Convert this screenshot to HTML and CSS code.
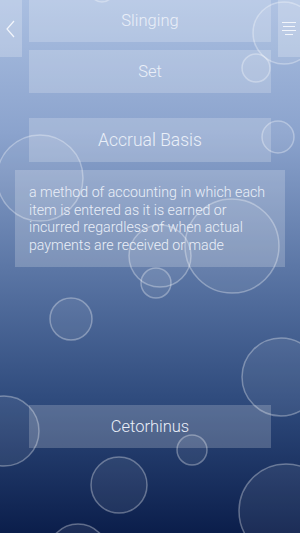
FILE: index.html
```html
<!DOCTYPE html>
<html lang="en">
<head>
    <meta charset="UTF-8">
    <meta name="viewport" content="width=device-width, initial-scale=1.0">
    <link rel="stylesheet" href="styles.css">
    <title>Accrual Basis</title>
</head>
<body>
    <svg class="bubbles" width="300" height="533" viewBox="0 0 300 533">
        <circle cx="102" cy="-10" r="12"/>
        <circle cx="284" cy="33" r="31"/>
        <circle cx="256" cy="68" r="14"/>
        <circle cx="40" cy="178" r="43"/>
        <circle cx="278" cy="137" r="16"/>
        <circle cx="160" cy="256" r="31"/>
        <circle cx="232" cy="246" r="47"/>
        <circle cx="156" cy="283" r="15"/>
        <circle cx="71" cy="319" r="21"/>
        <circle cx="281" cy="377" r="39"/>
        <circle cx="4" cy="431" r="35"/>
        <circle cx="192" cy="450" r="15"/>
        <circle cx="119" cy="485" r="28"/>
        <circle cx="286" cy="511" r="47"/>
        <circle cx="78" cy="554" r="30"/>
    </svg>

    <a class="tab tab-back" href="#">
        <svg width="12" height="20" viewBox="0 0 12 20"><path d="M9 2 L2 10 L9 18"/></svg>
    </a>
    <a class="tab tab-menu" href="#">
        <svg width="16" height="16" viewBox="0 0 16 16">
            <path d="M1 1.5 H15 M2 5.5 H14 M1 9.5 H15 M4 13.5 H12"/>
        </svg>
    </a>

    <main class="list">
        <div class="card card-first">Slinging</div>
        <div class="card">Set</div>
        <div class="card card-title">Accrual Basis</div>
        <div class="card card-def">a method of accounting in which each item is entered as it is earned or incurred regardless of when actual payments are received or made</div>
        <div class="card card-last">Cetorhinus</div>
    </main>
</body>
</html>
```

FILE: styles.css
```css
html, body {
    margin: 0;
    height: 100%;
}

body {
    position: relative;
    width: 300px;
    height: 533px;
    overflow: hidden;
    font-family: Roboto, 'Liberation Sans', Arial, sans-serif;
    font-weight: 300;
    color: #eaeff8;
    background: linear-gradient(to bottom, #aabfe1 0%, #8ba3cd 25%, #5c77a6 50%, #2f4b7d 75%, #0b1e4b 100%);
}

.bubbles {
    position: absolute;
    left: 0;
    top: 0;
}

.bubbles circle {
    fill: rgba(255, 255, 255, 0.07);
    stroke: rgba(255, 255, 255, 0.32);
    stroke-width: 1.5;
}

.tab {
    position: absolute;
    top: 0;
    width: 22px;
    height: 57px;
    display: flex;
    align-items: center;
    justify-content: center;
    background-color: rgba(255, 255, 255, 0.22);
}

.tab-back {
    left: 0;
}

.tab-menu {
    right: 0;
}

.tab svg path {
    fill: none;
    stroke: #f2f5fb;
    stroke-width: 1.2;
}

.list {
    position: relative;
    display: flex;
    flex-direction: column;
    align-items: center;
}

.card {
    box-sizing: border-box;
    width: 242px;
    height: 43px;
    display: flex;
    align-items: center;
    justify-content: center;
    font-size: 16.5px;
    background-color: rgba(255, 255, 255, 0.2);
    margin-top: 8px;
}

.card-first {
    margin-top: -1px;
}

.card-title {
    margin-top: 25px;
    height: 44px;
    font-size: 17.5px;
}

.card-def {
    width: 270px;
    height: 97px;
    display: block;
    padding: 14px 10px 0 14px;
    font-size: 14.2px;
    line-height: 17.5px;
    text-align: left;
}

.card-last {
    margin-top: 138px;
}
```
